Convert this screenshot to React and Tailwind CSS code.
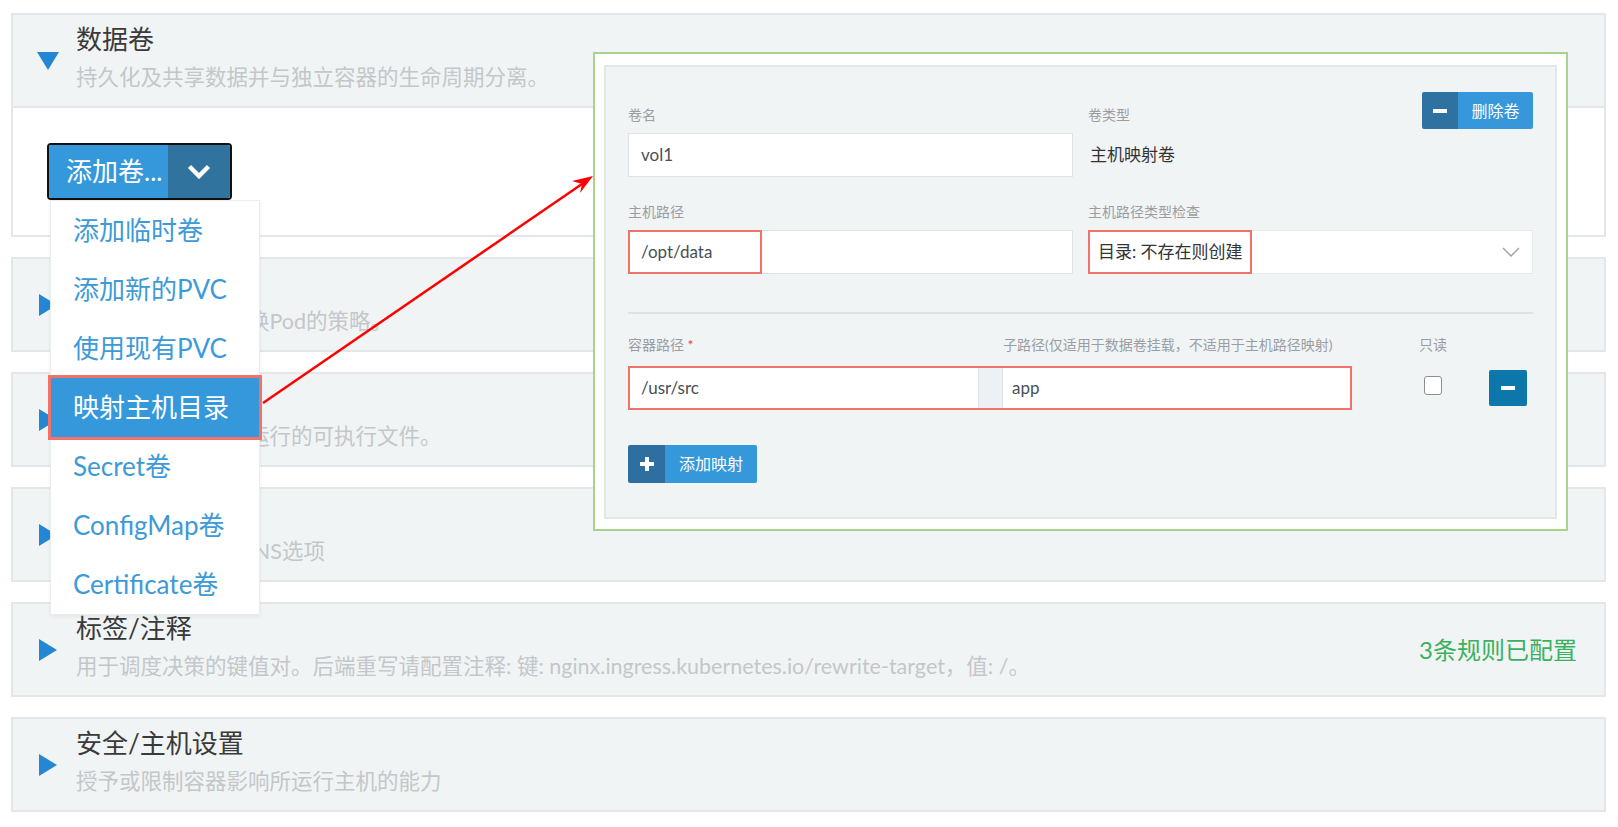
import React from 'react';

const sections = [
  { title: '升级策略', desc: '配置如何用新版替换Pod的策略。' },
  { title: '命令', desc: '在容器启动时需要运行的可执行文件。' },
  { title: '网络', desc: '配置主机名称和\u00a0\u00a0DNS选项' },
  {
    title: '标签/注释',
    desc: '用于调度决策的键值对。后端重写请配置注释: 键: nginx.ingress.kubernetes.io/rewrite-target，值: /。',
    right: '3条规则已配置',
  },
  { title: '安全/主机设置', desc: '授予或限制容器影响所运行主机的能力' },
];

const menuItems = ['添加临时卷', '添加新的PVC', '使用现有PVC', '映射主机目录', 'Secret卷', 'ConfigMap卷', 'Certificate卷'];

const Triangle = ({ open }) =>
  open ? (
    <svg width="22" height="18" viewBox="0 0 22 18">
      <polygon points="0,0 22,0 11,18" fill="#2587d3" />
    </svg>
  ) : (
    <svg width="18" height="22" viewBox="0 0 18 22">
      <polygon points="0,0 18,11 0,22" fill="#2587d3" />
    </svg>
  );

const SectionHeader = ({ title, desc, open, right }) => (
  <div className="flex h-[91px] items-center bg-[#f1f4f5] pl-[24px] pr-[27px]">
    <div className="flex w-[22px] justify-center">
      <Triangle open={open} />
    </div>
    <div className="ml-[17px] min-w-0 flex-1 pb-[8px]">
      <div className="text-[26px] leading-[32px] text-[#3a3a3a]">{title}</div>
      <div className="mt-[8px] whitespace-nowrap text-[21.5px] leading-[28px] text-[#c3c7ca]">{desc}</div>
    </div>
    {right && <div className="text-[24px] text-[#3bb15f]">{right}</div>}
  </div>
);

const Minus = () => <div className="h-[4px] w-[14px] bg-white" />;

const Label = ({ children, className = '' }) => (
  <div className={'h-[20px] text-[14px] leading-[20px] text-[#9a9ea2] ' + className}>{children}</div>
);

const VolumeForm = () => (
  <div className="absolute left-[593px] top-[52px] z-20 w-[975px] border-2 border-[#a8d38e] bg-white px-[9px] pb-[10px] pt-[11px]">
    <div className="border-2 border-[#e3e7ea] bg-[#f1f4f5] px-[22px] pb-[34px] pt-[25px]">
      {/* name / type */}
      <div className="grid grid-cols-2 gap-x-[15px]">
        <div>
          <Label className="mt-[13px]">卷名</Label>
          <div className="mt-[8px] flex h-[44px] items-center border border-[#dfe3e6] bg-white pl-[12px] text-[17px] text-[#4a4f55]">
            vol1
          </div>
        </div>
        <div>
          <div className="flex items-start justify-between">
            <Label className="mt-[13px]">卷类型</Label>
            <button className="flex h-[37px] w-[111px] overflow-hidden rounded-[2px]">
              <span className="flex h-full w-[36px] items-center justify-center bg-[#2f71a0]">
                <Minus />
              </span>
              <span className="flex h-full flex-1 items-center justify-center bg-[#3697da] text-[16px] text-white">删除卷</span>
            </button>
          </div>
          <div className="mt-[4px] flex h-[44px] items-center pl-[2px] text-[17px] text-[#333]">主机映射卷</div>
        </div>
      </div>

      {/* host path / check */}
      <div className="mt-[25px] grid grid-cols-2 gap-x-[15px]">
        <div>
          <Label>主机路径</Label>
          <div className="mt-[8px] flex h-[44px] border border-[#dfe3e6] bg-white">
            <span className="-m-px flex h-[44px] w-[134px] items-center border-2 border-[#f0726a] pl-[11px] text-[17px] text-[#4a4f55]">
              /opt/data
            </span>
          </div>
        </div>
        <div>
          <Label>主机路径类型检查</Label>
          <div className="mt-[8px] flex h-[44px] items-center justify-between border border-[#e6e9eb] bg-white">
            <span className="-m-px flex h-[44px] w-[164px] items-center border-2 border-[#f0726a] pl-[8px] text-[17px] text-[#333]">
              目录: 不存在则创建
            </span>
            <svg width="18" height="10" viewBox="0 0 18 10" className="mr-[12px]">
              <polyline points="1,1 9,9 17,1" fill="none" stroke="#9aa0a5" strokeWidth="1.4" />
            </svg>
          </div>
        </div>
      </div>

      <div className="mt-[38px] h-[2px] bg-[#dde2e5]" />

      {/* mounts */}
      <div className="mt-[21px] flex">
        <Label className="w-[375px]">
          容器路径 <span className="text-[#e2463f]">*</span>
        </Label>
        <Label className="w-[416px]">子路径(仅适用于数据卷挂载，不适用于主机路径映射)</Label>
        <Label>只读</Label>
      </div>
      <div className="mt-[11px] flex items-center">
        <div className="flex h-[44px] w-[724px] border-2 border-[#f0726a] bg-white text-[17px] text-[#4a4f55]">
          <div className="flex w-[348px] items-center pl-[11px]">/usr/src</div>
          <div className="w-[25px] border-x border-[#dde2e5] bg-[#eef1f3]" />
          <div className="flex flex-1 items-center pl-[9px]">app</div>
        </div>
        <div className="mb-[5px] ml-[72px] h-[19px] w-[18px] rounded-[3px] border-[1.5px] border-[#8a8f94] bg-white" />
        <button className="ml-[47px] flex h-[36px] w-[38px] items-center justify-center rounded-[2px] bg-[#0d76ab]">
          <Minus />
        </button>
      </div>

      <button className="mt-[35px] flex h-[38px] w-[129px] overflow-hidden rounded-[2px]">
        <span className="flex h-full w-[37px] items-center justify-center bg-[#2f6f9f]">
          <svg width="14" height="14" viewBox="0 0 14 14">
            <rect x="5" y="0" width="4" height="14" fill="#fff" />
            <rect x="0" y="5" width="14" height="4" fill="#fff" />
          </svg>
        </span>
        <span className="flex h-full flex-1 items-center justify-center bg-[#3598da] text-[16px] text-white">添加映射</span>
      </button>
    </div>
  </div>
);

export default function App() {
  return (
    <div className="relative min-h-[827px] bg-white pb-[15px] pl-[11px] pr-[12px] pt-[13px] font-[Lato,'Noto_Sans_CJK_SC',sans-serif]">
      <div className="flex flex-col gap-[20px]">
        {/* 数据卷 (expanded) */}
        <div className="border-2 border-[#e3e7ea]">
          <div className="border-b-2 border-[#e3e7ea]">
            <SectionHeader open title="数据卷" desc="持久化及共享数据并与独立容器的生命周期分离。" />
          </div>
          <div className="bg-white py-[35px] pl-[34px]">
            <div className="relative z-10 inline-block">
              <div className="flex h-[57px] w-[185px] overflow-hidden rounded-[4px] border-2 border-[#111]">
                <div className="flex w-[119px] items-center bg-[#3498db] pl-[17px] text-[26px] text-white">添加卷...</div>
                <div className="flex flex-1 items-center justify-center bg-[#31739f]">
                  <svg width="24" height="15" viewBox="0 0 24 15">
                    <polyline points="2.5,2.5 12,12 21.5,2.5" fill="none" stroke="#fff" strokeWidth="4.5" />
                  </svg>
                </div>
              </div>
              <div className="absolute left-[3px] top-full w-[210px] border border-[#e9edef] bg-white shadow-[0_2px_4px_rgba(0,0,0,0.06)]">
                {menuItems.map((item) => (
                  <div
                    key={item}
                    className={
                      item === '映射主机目录'
                        ? 'flex h-[59px] items-center bg-[#3498db] pl-[22px] text-[26px] text-white outline-[3px] outline-solid outline-[#f2716a]'
                        : 'flex h-[59px] items-center pl-[22px] text-[26px] text-[#3c9ad9]'
                    }
                  >
                    {item}
                  </div>
                ))}
              </div>
            </div>
          </div>
        </div>

        {sections.map((s) => (
          <div key={s.title} className="border-2 border-[#e3e7ea]">
            <SectionHeader title={s.title} desc={s.desc} right={s.right} />
          </div>
        ))}
      </div>

      <VolumeForm />

      {/* callout arrow */}
      <svg className="pointer-events-none absolute left-0 top-0 z-30" width="1618" height="827">
        <line x1="263" y1="403" x2="582" y2="184" stroke="#ff0000" strokeWidth="2.5" />
        <polygon points="593,176 580,193 582,184 572,181" fill="#ff0000" />
      </svg>
    </div>
  );
}
